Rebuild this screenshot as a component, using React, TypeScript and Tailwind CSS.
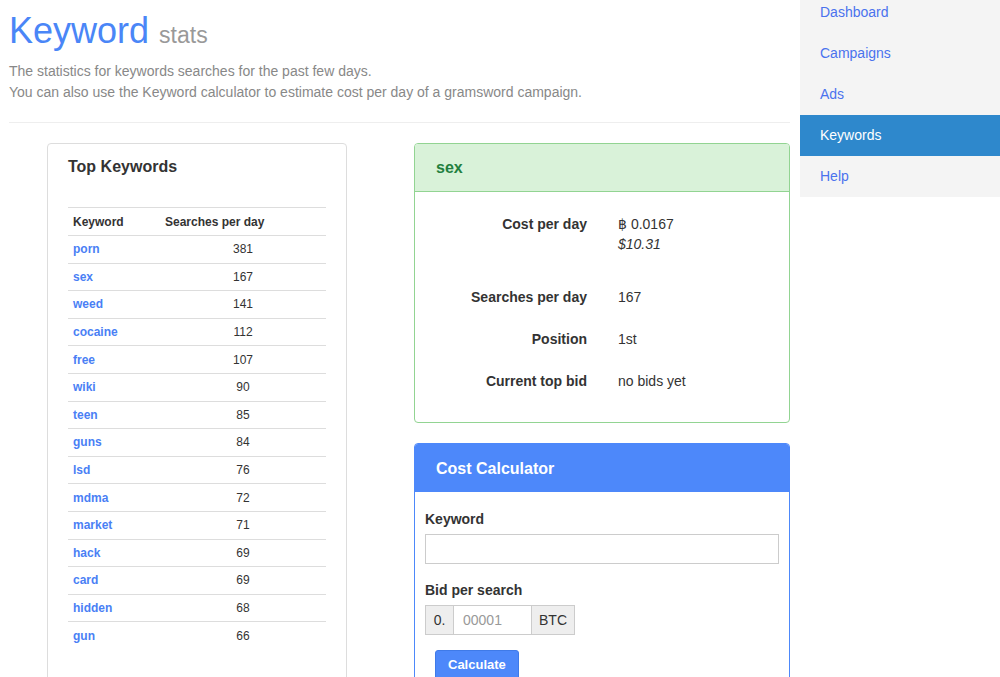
import React from 'react';

// Top keywords table data
const keywords = [
  { word: 'porn', count: 381 },
  { word: 'sex', count: 167 },
  { word: 'weed', count: 141 },
  { word: 'cocaine', count: 112 },
  { word: 'free', count: 107 },
  { word: 'wiki', count: 90 },
  { word: 'teen', count: 85 },
  { word: 'guns', count: 84 },
  { word: 'lsd', count: 76 },
  { word: 'mdma', count: 72 },
  { word: 'market', count: 71 },
  { word: 'hack', count: 69 },
  { word: 'card', count: 69 },
  { word: 'hidden', count: 68 },
  { word: 'gun', count: 66 },
];

const navItems = ['Dashboard', 'Campaigns', 'Ads', 'Keywords', 'Help'];

function App() {
  return (
    <div className="h-screen overflow-hidden bg-white flex font-['Liberation_Sans',Arial,sans-serif] text-[#333]">
      {/* Main content */}
      <div className="w-[800px] pl-[9px] pr-[10px]">
        <h1 className="pt-[11px] text-[36px] leading-[40px] text-[#4a86f7]">
          Keyword <span className="text-[23px] text-[#999]">stats</span>
        </h1>
        <p className="mt-[6px] text-[14px] leading-[21px] text-[#888]">
          The statistics for keywords searches for the past few days.
          <br />
          You can also use the Keyword calculator to estimate cost per day of a gramsword campaign.
        </p>
        <hr className="mt-[19px] border-0 border-t border-[#eee]" />

        <div className="mt-[20px] flex pl-[38px]">
          {/* Top keywords card */}
          <div className="w-[300px] shrink-0 border border-[#ddd] rounded-[4px] px-[20px] pt-[14px] pb-[40px]">
            <h3 className="text-[16px] leading-[18px] font-bold">Top Keywords</h3>
            <div className="mt-[31px] text-[12px]">
              <div className="grid grid-cols-[92px_1fr] items-center h-[28px] border-t border-[#ddd] font-bold">
                <div className="px-[5px]">Keyword</div>
                <div className="px-[5px]">Searches per day</div>
              </div>
              {keywords.map((k) => (
                <div
                  key={k.word}
                  className="grid grid-cols-[92px_1fr] items-center h-[27.6px] border-t border-[#ddd]"
                >
                  <a href="#" className="px-[5px] font-bold text-[#4a7ff5]">
                    {k.word}
                  </a>
                  <div className="px-[5px] text-center">{k.count}</div>
                </div>
              ))}
            </div>
          </div>

          <div className="ml-[67px] w-[376px] shrink-0">
            {/* Keyword detail card */}
            <div className="border border-[#92d492] rounded-[4px] overflow-hidden">
              <div className="h-[48px] bg-[#d9f2d9] border-b border-[#92d492] px-[21px] flex items-center">
                <h3 className="text-[16px] font-bold text-[#23803f]">sex</h3>
              </div>
              <div className="pt-[22px] pb-[31px] px-[15px] text-[14px] leading-[20px]">
                <div className="grid grid-cols-[157px_1fr] gap-x-[31px] mb-[33px]">
                  <div className="text-right font-bold">Cost per day</div>
                  <div>
                    <div>฿ 0.0167</div>
                    <div className="italic">$10.31</div>
                  </div>
                </div>
                <div className="grid grid-cols-[157px_1fr] gap-x-[31px] mb-[22px]">
                  <div className="text-right font-bold">Searches per day</div>
                  <div>167</div>
                </div>
                <div className="grid grid-cols-[157px_1fr] gap-x-[31px] mb-[22px]">
                  <div className="text-right font-bold">Position</div>
                  <div>1st</div>
                </div>
                <div className="grid grid-cols-[157px_1fr] gap-x-[31px]">
                  <div className="text-right font-bold">Current top bid</div>
                  <div>no bids yet</div>
                </div>
              </div>
            </div>

            {/* Cost calculator card */}
            <div className="mt-[20px] border border-[#4d88fa] rounded-[4px] overflow-hidden">
              <div className="h-[48px] bg-[#4d88fa] px-[21px] pt-[2px] flex items-center">
                <h3 className="text-[16px] font-bold text-white">Cost Calculator</h3>
              </div>
              <div className="pt-[17px] px-[10px] pb-[30px] text-[14px]">
                <label className="block font-bold leading-[20px]">Keyword</label>
                <input
                  type="text"
                  className="mt-[5px] block w-full h-[30px] border border-[#ccc] px-[10px] outline-none"
                />
                <label className="mt-[16px] block font-bold leading-[20px]">Bid per search</label>
                <div className="mt-[5px] flex h-[30px] w-[150px]">
                  <span className="w-[28px] flex items-center justify-center bg-[#eee] border border-[#ccc] border-r-0">
                    0.
                  </span>
                  <input
                    type="text"
                    placeholder="00001"
                    className="w-[79px] border border-[#ccc] px-[9px] outline-none placeholder:text-[#999]"
                  />
                  <span className="w-[43px] flex items-center justify-center bg-[#eee] border border-[#ccc] border-l-0">
                    BTC
                  </span>
                </div>
                <button className="mt-[15px] ml-[10px] h-[30px] px-[12px] rounded-[3px] bg-[#4d88fa] border border-[#3f7ae8] text-white text-[13px] font-bold">
                  Calculate
                </button>
              </div>
            </div>
          </div>
        </div>
      </div>

      {/* Sidebar */}
      <div className="w-[200px] self-start -mt-[8px] bg-[#f4f4f4]">
        {navItems.map((item) => (
          <a
            key={item}
            href="#"
            className={`block h-[41px] leading-[41px] pl-[20px] text-[14px] ${
              item === 'Keywords' ? 'bg-[#2e88cc] text-white' : 'text-[#4a72ee]'
            }`}
          >
            {item}
          </a>
        ))}
      </div>
    </div>
  );
}

export default App;
